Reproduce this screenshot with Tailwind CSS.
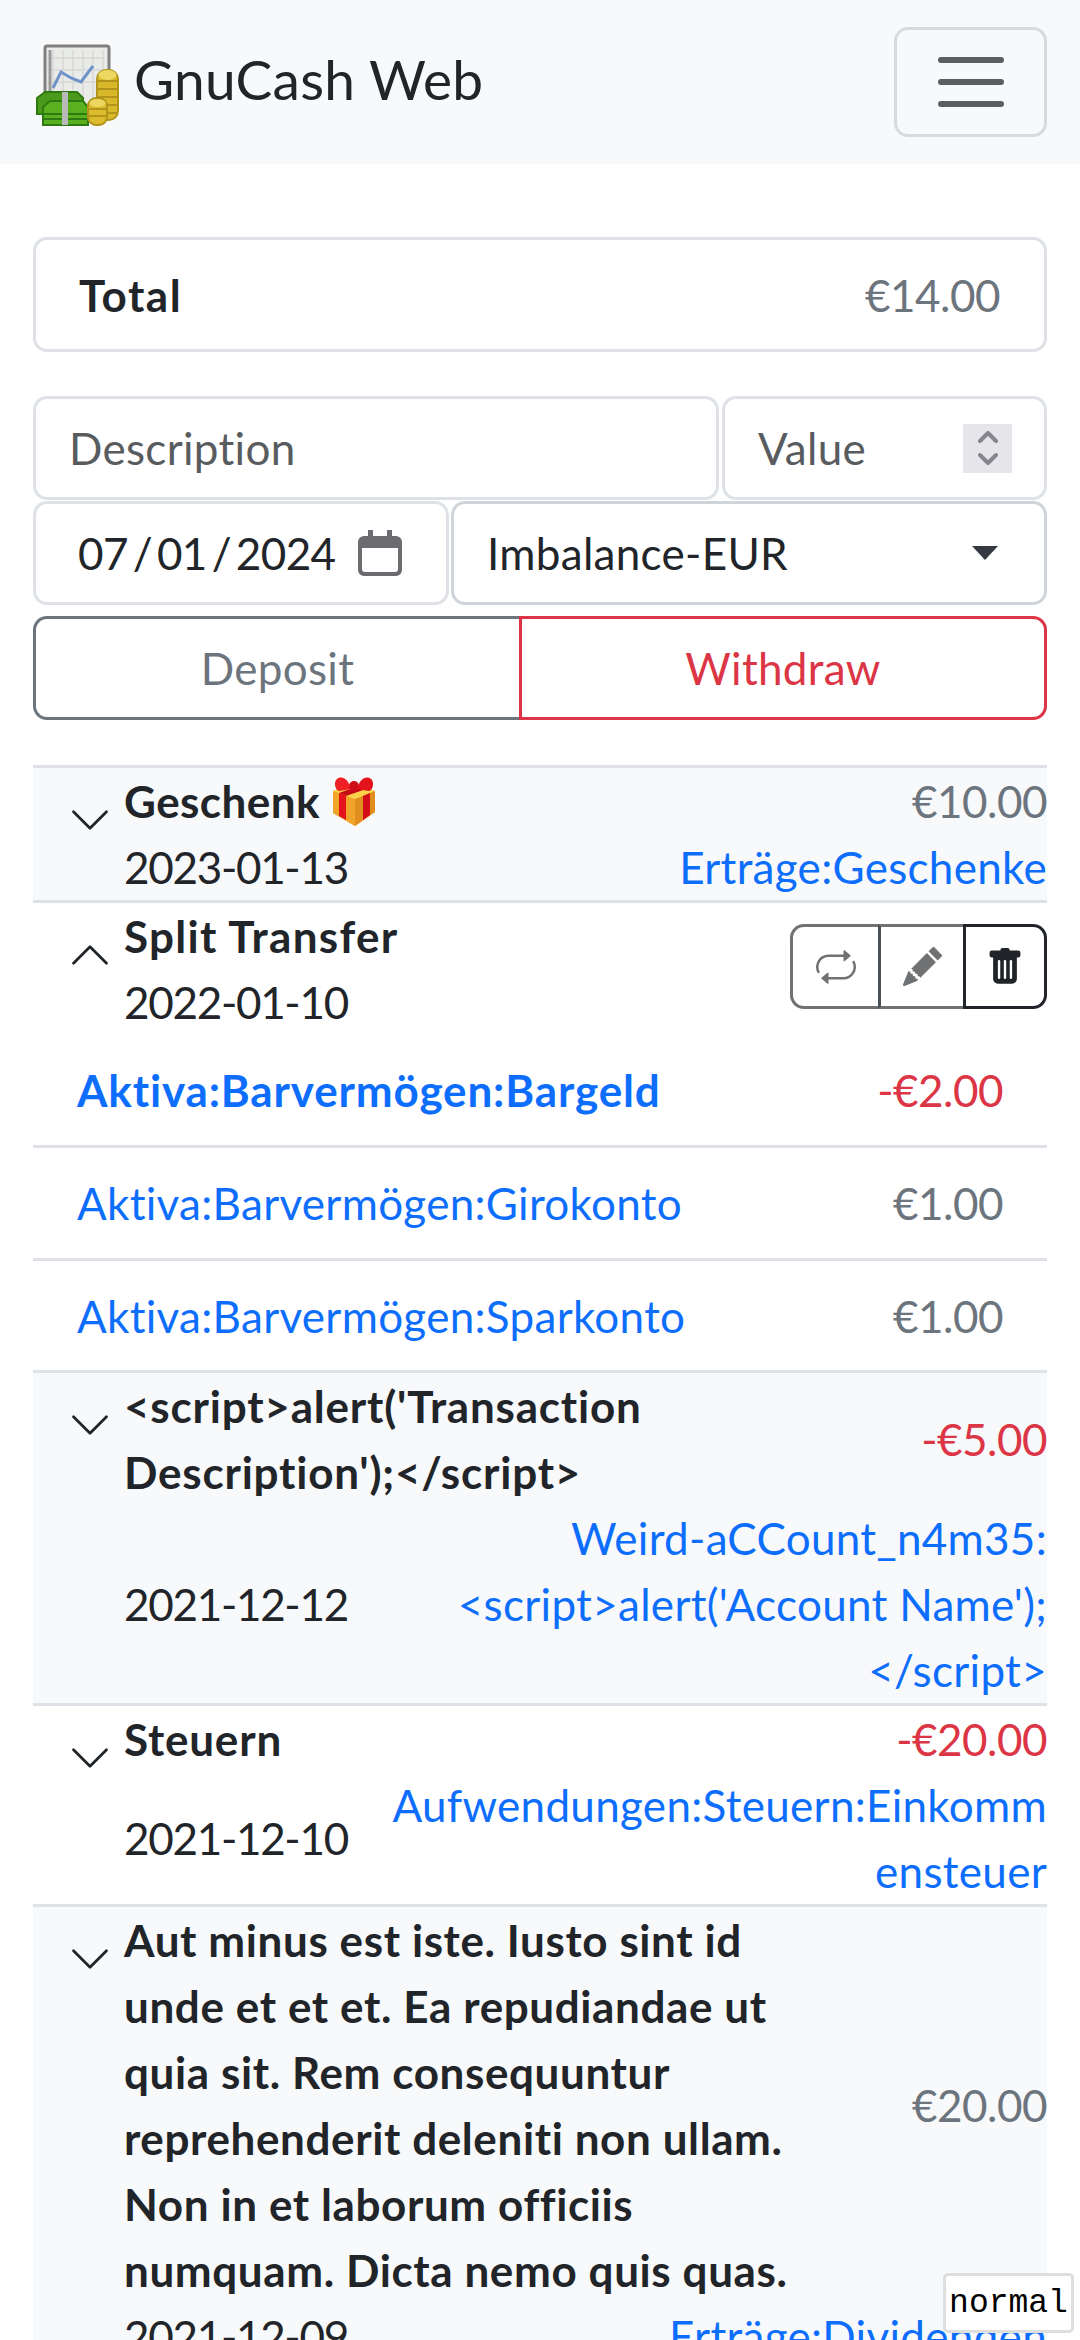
<!DOCTYPE html>
<html lang="en">
  <head>
    <meta charset="UTF-8" />
    <meta name="viewport" content="width=device-width, initial-scale=1.0" />
    <title>GnuCash Web</title>
    <script src="https://cdn.jsdelivr.net/npm/@tailwindcss/browser@4"></script>
  </head>

  <body class="bg-white">
    <div class="relative h-[2340px] w-[1080px] overflow-hidden bg-white text-[44px] leading-[66px] tracking-[0.3px] text-[#212529] [font-family:'Lato',sans-serif]">
      <!-- navbar -->
      <nav class="flex h-[164px] items-center justify-between bg-[#f8f9fa] pl-[33px] pr-[33px]">
        <div class="flex items-center">
          <svg class="h-[88px] w-[90px] blur-[0.6px]" viewBox="0 0 90 88">
            <rect x="12" y="8" width="64" height="66" rx="2" fill="#e9ebe8" stroke="#808080" stroke-width="3" />
            <path d="M20 12v50M30 12v50M40 12v50M50 12v50M60 12v50M70 12v50M14 20h58M14 32h58M14 44h58" stroke="#d7d9d6" stroke-width="1.5" />
            <path d="M17 12v50" stroke="#9a9a9a" stroke-width="3" />
            <path d="M20 50 L28 34 L38 40 L48 44 L60 28" fill="none" stroke="#6f93c8" stroke-width="3" />
            <path d="M4 60 L12 54 H44 L50 60 V76 H4Z" fill="#4c9a1c" stroke="#2f7a10" stroke-width="2" />
            <path d="M10 69 L17 63 H50 L55 69 V87 H10Z" fill="#59b11f" stroke="#2f7a10" stroke-width="2" />
            <path d="M10 76h45M10 81h45" stroke="#2f7a10" stroke-width="2" />
            <rect x="29" y="54" width="6" height="33" fill="#b9b9b9" />
            <rect x="64" y="32" width="21" height="50" rx="9" fill="#d9b92a" stroke="#b3941a" stroke-width="2" />
            <path d="M65 43h19M65 51h19M65 59h19M65 67h19M65 75h19" stroke="#b3941a" stroke-width="2" />
            <ellipse cx="74.500" cy="37" rx="9" ry="5" fill="#ecd860" />
            <rect x="55" y="60" width="19" height="27" rx="8" fill="#dcbc2c" stroke="#b3941a" stroke-width="2" />
            <path d="M56 71h17M56 78h17" stroke="#b3941a" stroke-width="2" />
            <ellipse cx="64.500" cy="65" rx="8" ry="4" fill="#ecd860" />
          </svg>
          <span class="-mt-[6px] ml-[11px] text-[55px] leading-[82px]">GnuCash Web</span>
        </div>
        <button class="flex h-[110px] w-[153px] flex-col items-center justify-center gap-[16px] rounded-[14px] border-[3px] border-[#d9dadb]">
          <span class="h-[6px] w-[66px] rounded-full bg-[#5b5e62]"></span>
          <span class="h-[6px] w-[66px] rounded-full bg-[#5b5e62]"></span>
          <span class="h-[6px] w-[66px] rounded-full bg-[#5b5e62]"></span>
        </button>
      </nav>

      <main class="px-[33px]">
        <!-- total -->
        <div class="mt-[73px] flex h-[115px] items-center justify-between rounded-[14px] border-[3px] border-[#dee2e6] pl-[43px] pr-[44px]">
          <span class="font-bold tracking-[1.5px]">Total</span>
          <span class="tracking-[-0.5px] text-[#6c757d]">€14.00</span>
        </div>

        <!-- new transaction form -->
        <form class="mt-[44px]">
          <div class="flex gap-[3px]">
            <input class="h-[104px] w-[686px] rounded-[14px] border-[3px] border-[#dee2e6] px-[33px] outline-none placeholder:text-[#595c5f]" placeholder="Description" />
            <div class="flex h-[104px] w-[325px] items-center rounded-[14px] border-[3px] border-[#dee2e6] pl-[33px] pr-[32px]">
              <span class="flex-1 text-[#595c5f]">Value</span>
              <span class="flex h-[49px] w-[49px] items-center justify-center bg-[#e6e6ea]">
                <svg class="h-[34px] w-[20px]" viewBox="0 0 20 34" fill="none" stroke="#85858f" stroke-width="4" stroke-linecap="round" stroke-linejoin="round">
                  <path d="M2 10 L10 2 L18 10" />
                  <path d="M2 24 L10 32 L18 24" />
                </svg>
              </span>
            </div>
          </div>
          <div class="mt-[1px] flex gap-[2px]">
            <div class="flex h-[104px] w-[416px] items-center rounded-[14px] border-[3px] border-[#dee2e6] pl-[42px]">
              <span class="w-[280px] whitespace-nowrap tracking-[-0.6px]">07&thinsp;/&thinsp;01&thinsp;/&thinsp;2024</span>
              <svg class="h-[46px] w-[44px]" viewBox="0 0 44 46">
                <path d="M10 0h5v6H29V0h5v6h4a6 6 0 0 1 6 6v28a6 6 0 0 1-6 6H6a6 6 0 0 1-6-6V12a6 6 0 0 1 6-6h4Z M4 18V39a3 3 0 0 0 3 3H37a3 3 0 0 0 3-3V18Z" fill="#6c6c70" fill-rule="evenodd" />
              </svg>
            </div>
            <div class="flex h-[104px] w-[596px] items-center justify-between rounded-[14px] border-[3px] border-[#ced4da] pl-[33px] pr-[46px]">
              <span class="text-[#212529]">Imbalance-EUR</span>
              <svg class="h-[14px] w-[26px]" viewBox="0 0 26 14"><path d="M0 0h26L13 14Z" fill="#343a40" /></svg>
            </div>
          </div>
          <div class="mt-[11px] flex h-[104px]">
            <button type="button" class="w-[486px] rounded-l-[14px] border-[3px] border-r-0 border-[#6c757d] text-[#6c757d]">Deposit</button>
            <button type="button" class="w-[528px] rounded-r-[14px] border-[3px] border-[#dc3545] text-[#dc3545]">Withdraw</button>
          </div>
        </form>

        <!-- transactions -->
        <div class="mt-[45px]">
          <!-- Geschenk -->
          <div class="flex border-t-[3px] border-[#dee2e6] bg-[#f8f9fa]">
            <svg class="ml-[35px] mt-[30px] h-[44px] w-[44px] shrink-0 fill-[#212529]" viewBox="0 0 16 16"><path d="M1.646 4.646a.5.5 0 0 1 .708 0L8 10.293l5.646-5.647a.5.5 0 0 1 .708.708l-6 6a.5.5 0 0 1-.708 0l-6-6a.5.5 0 0 1 0-.708z" /></svg>
            <div class="ml-[12px] flex-1">
              <div class="flex items-center justify-between">
                <span class="flex items-center font-bold tracking-[0.45px]">Geschenk
                  <svg class="ml-[11px] h-[50px] w-[46px]" viewBox="0 0 46 50">
                    <path d="M2 15 L23 8 L44 15 V36 L24 50 L2 37Z" fill="#f2b233" />
                    <path d="M2 15 L24 23 V50 L2 37Z" fill="#f0a52a" />
                    <path d="M24 23 L44 15 V36 L24 50Z" fill="#e08e1d" />
                    <path d="M2 15 L23 8 L44 15 L24 23Z" fill="#fbd24a" />
                    <path d="M8 17 L15 20 V44 L8 40Z" fill="#e3121b" />
                    <path d="M32 20 L39 17 V39 L32 44Z" fill="#d60d18" />
                    <path d="M8 17 L30 9 L38 12 L15 20Z" fill="#c40d16" />
                    <path d="M4 8 C4 0 14 -1 18 8 L20 13 L8 15 C5 14 4 11 4 8Z" fill="#f01f25" />
                    <path d="M42 8 C42 0 32 -1 28 8 L26 13 L38 15 C41 14 42 11 42 8Z" fill="#e3121b" />
                    <circle cx="23" cy="10" r="5" fill="#d10f18" />
                  </svg>
                </span>
                <span class="tracking-[-0.5px] text-[#6c757d]">€10.00</span>
              </div>
              <div class="flex items-center justify-between">
                <span class="whitespace-nowrap tracking-[-1.3px]">2023-01-13</span>
                <a class="text-[#0d6efd]">Erträge:Geschenke</a>
              </div>
            </div>
          </div>

          <!-- Split Transfer (expanded) -->
          <div class="border-t-[3px] border-[#dee2e6] bg-white">
            <div class="relative flex">
              <svg class="ml-[35px] mt-[30px] h-[44px] w-[44px] shrink-0 fill-[#212529]" viewBox="0 0 16 16"><path d="M7.646 4.646a.5.5 0 0 1 .708 0l6 6a.5.5 0 0 1-.708.708L8 5.707l-5.646 5.647a.5.5 0 0 1-.708-.708l6-6z" /></svg>
              <div class="ml-[12px] flex-1">
                <div class="font-bold tracking-[1.3px]">Split Transfer</div>
                <div class="tracking-[-1.3px]">2022-01-10</div>
              </div>
              <div class="mt-[21px] flex h-[85px] w-[257px]">
                <button class="flex w-[88px] items-center justify-center rounded-l-[14px] border-[3px] border-r-0 border-[#6f7173]">
                  <svg class="h-[40px] w-[40px] fill-[#6f7173]" viewBox="0 0 16 16"><path d="M11 5.466V4H5a4 4 0 0 0-3.584 5.777.5.5 0 1 1-.896.446A5 5 0 0 1 5 3h6V1.534a.25.25 0 0 1 .41-.192l2.36 1.966c.12.1.12.284 0 .384l-2.36 1.966a.25.25 0 0 1-.41-.192Zm3.81.086a.5.5 0 0 1 .67.225A5 5 0 0 1 11 13H5v1.466a.25.25 0 0 1-.41.192l-2.36-1.966a.25.25 0 0 1 0-.384l2.36-1.966a.25.25 0 0 1 .41.192V12h6a4 4 0 0 0 3.585-5.777.5.5 0 0 1 .225-.67Z" /></svg>
                </button>
                <button class="flex w-[85px] items-center justify-center border-y-[3px] border-l-[3px] border-y-[#6f7173] border-l-[#495057]">
                  <svg class="h-[39px] w-[39px] fill-[#6f7173]" viewBox="0 0 16 16"><path d="M12.854.146a.5.5 0 0 0-.707 0L10.5 1.793 14.207 5.5l1.647-1.646a.5.5 0 0 0 0-.708l-3-3zm.646 6.061L9.793 2.5 3.293 9H3.5a.5.5 0 0 1 .5.5v.5h.5a.5.5 0 0 1 .5.5v.5h.5a.5.5 0 0 1 .5.5v.5h.5a.5.5 0 0 1 .5.5v.207l6.5-6.5zm-7.468 7.468A.5.5 0 0 1 6 13.5V13h-.5a.5.5 0 0 1-.5-.5V12h-.5a.5.5 0 0 1-.5-.5V11h-.5a.5.5 0 0 1-.5-.5V10h-.5a.499.499 0 0 1-.175-.032l-.179.178a.5.5 0 0 0-.11.168l-2 5a.5.5 0 0 0 .65.65l5-2a.5.5 0 0 0 .168-.11l.178-.178z" /></svg>
                </button>
                <button class="flex w-[84px] items-center justify-center rounded-r-[14px] border-[3px] border-[#212529]">
                  <svg class="h-[38px] w-[38px] fill-[#212529]" viewBox="0 0 16 16"><path d="M2.5 1a1 1 0 0 0-1 1v1a1 1 0 0 0 1 1H3v9a2 2 0 0 0 2 2h6a2 2 0 0 0 2-2V4h.5a1 1 0 0 0 1-1V2a1 1 0 0 0-1-1H10a1 1 0 0 0-1-1H7a1 1 0 0 0-1 1H2.5zm3 4a.5.5 0 0 1 .5.5v7a.5.5 0 0 1-1 0v-7a.5.5 0 0 1 .5-.5zM8 5a.5.5 0 0 1 .5.5v7a.5.5 0 0 1-1 0v-7A.5.5 0 0 1 8 5zm3 .5v7a.5.5 0 0 1-1 0v-7a.5.5 0 0 1 1 0z" /></svg>
                </button>
              </div>
            </div>
            <div class="flex h-[110px] items-center justify-between px-[44px]">
              <a class="font-bold tracking-[0.85px] text-[#0d6efd]">Aktiva:Barvermögen:Bargeld</a>
              <span class="tracking-[-0.5px] text-[#dc3545]">-€2.00</span>
            </div>
            <div class="flex h-[113px] items-center justify-between border-t-[3px] border-[#dee2e6] px-[44px]">
              <a class="text-[#0d6efd]">Aktiva:Barvermögen:Girokonto</a>
              <span class="tracking-[-0.5px] text-[#6c757d]">€1.00</span>
            </div>
            <div class="flex h-[112px] items-center justify-between border-t-[3px] border-[#dee2e6] px-[44px]">
              <a class="text-[#0d6efd]">Aktiva:Barvermögen:Sparkonto</a>
              <span class="tracking-[-0.5px] text-[#6c757d]">€1.00</span>
            </div>
          </div>

          <!-- script injection row -->
          <div class="flex border-t-[3px] border-[#dee2e6] bg-[#f8f9fa]">
            <svg class="ml-[35px] mt-[30px] h-[44px] w-[44px] shrink-0 fill-[#212529]" viewBox="0 0 16 16"><path d="M1.646 4.646a.5.5 0 0 1 .708 0L8 10.293l5.646-5.647a.5.5 0 0 1 .708.708l-6 6a.5.5 0 0 1-.708 0l-6-6a.5.5 0 0 1 0-.708z" /></svg>
            <div class="ml-[12px] flex-1">
              <div class="flex items-center justify-between">
                <span class="w-[670px] font-bold tracking-[0.8px]">&lt;script&gt;alert('Transaction Description');&lt;/script&gt;</span>
                <span class="tracking-[-0.5px] text-[#dc3545]">-€5.00</span>
              </div>
              <div class="flex items-center justify-between">
                <span class="whitespace-nowrap tracking-[-1.3px]">2021-12-12</span>
                <a class="text-right text-[#0d6efd]">Weird-aCCount_n4m35:<br />&lt;script&gt;alert('Account Name');<br />&lt;/script&gt;</a>
              </div>
            </div>
          </div>

          <!-- Steuern -->
          <div class="flex border-t-[3px] border-[#dee2e6] bg-white">
            <svg class="ml-[35px] mt-[30px] h-[44px] w-[44px] shrink-0 fill-[#212529]" viewBox="0 0 16 16"><path d="M1.646 4.646a.5.5 0 0 1 .708 0L8 10.293l5.646-5.647a.5.5 0 0 1 .708.708l-6 6a.5.5 0 0 1-.708 0l-6-6a.5.5 0 0 1 0-.708z" /></svg>
            <div class="ml-[12px] flex-1">
              <div class="flex items-center justify-between">
                <span class="font-bold tracking-[0.8px]">Steuern</span>
                <span class="tracking-[-0.5px] text-[#dc3545]">-€20.00</span>
              </div>
              <div class="flex items-center justify-between">
                <span class="whitespace-nowrap tracking-[-1.3px]">2021-12-10</span>
                <a class="text-right text-[#0d6efd]">Aufwendungen:Steuern:Einkomm<br />ensteuer</a>
              </div>
            </div>
          </div>

          <!-- long description -->
          <div class="flex border-t-[3px] border-[#dee2e6] bg-[#f8f9fa]">
            <svg class="ml-[35px] mt-[30px] h-[44px] w-[44px] shrink-0 fill-[#212529]" viewBox="0 0 16 16"><path d="M1.646 4.646a.5.5 0 0 1 .708 0L8 10.293l5.646-5.647a.5.5 0 0 1 .708.708l-6 6a.5.5 0 0 1-.708 0l-6-6a.5.5 0 0 1 0-.708z" /></svg>
            <div class="ml-[12px] flex-1">
              <div class="flex items-center justify-between">
                <span class="w-[670px] font-bold tracking-[0.6px]">Aut minus est iste. Iusto sint id unde et et et. Ea repudiandae ut quia sit. Rem consequuntur reprehenderit deleniti non ullam. Non in et laborum officiis numquam. Dicta nemo quis quas.</span>
                <span class="tracking-[-0.5px] text-[#6c757d]">€20.00</span>
              </div>
              <div class="flex items-center justify-between">
                <span class="whitespace-nowrap tracking-[-1.3px]">2021-12-09</span>
                <a class="text-right text-[#0d6efd]">Erträge:Dividenden</a>
              </div>
            </div>
          </div>
        </div>
      </main>

      <!-- viewport mode badge -->
      <div class="absolute left-[943px] top-[2273px] flex h-[60px] w-[131px] items-center justify-center rounded-[5px] border-[3px] border-[#dedede] bg-white text-[33px] leading-none tracking-normal text-black [font-family:'Liberation_Mono',monospace]">normal</div>
    </div>
  </body>
</html>
